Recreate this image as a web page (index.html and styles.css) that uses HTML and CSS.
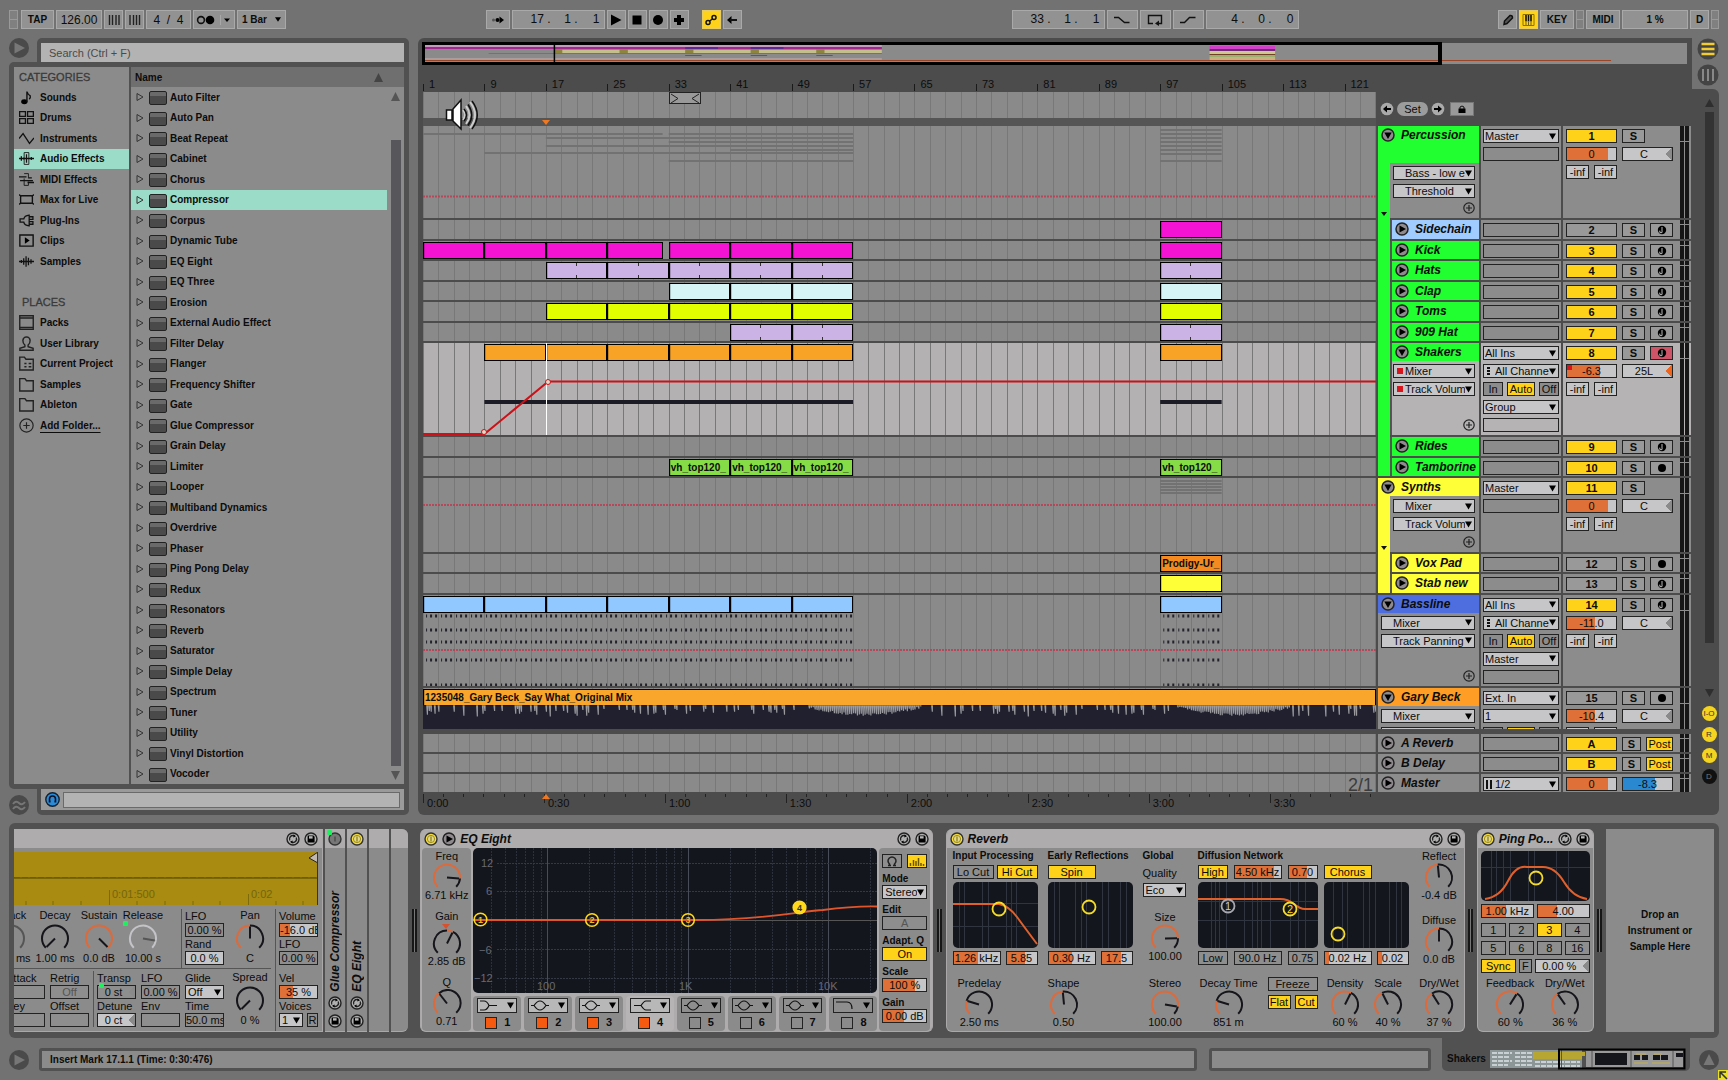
FILE: index.html
```html
<!DOCTYPE html>
<html lang="en">
<head>
<meta charset="utf-8">
<meta name="viewport" content="width=device-width, initial-scale=1">
<title>Arrangement</title>
<link rel="stylesheet" href="styles.css">
</head>
<body>
<svg class="defs" aria-hidden="true">
  <symbol id="i-right" viewBox="0 0 14 14"><circle cx="7" cy="7" r="6" fill="#8e8a8e" stroke="#222" stroke-width="1.5"/><path d="M4.5 3.5L11 7L4.5 10.5Z"/></symbol>
  <symbol id="i-down" viewBox="0 0 14 14"><circle cx="7" cy="7" r="6" fill="#8e8a8e" stroke="#222" stroke-width="1.5"/><path d="M3.3 4.5H10.7L7 11Z"/></symbol>
  <symbol id="i-plus" viewBox="0 0 12 12"><circle cx="6" cy="6" r="5.2" fill="none" stroke="#222" stroke-width="1.2"/><path d="M6 3V9M3 6H9" stroke="#222" stroke-width="1.2"/></symbol>
  <symbol id="i-power" viewBox="0 0 14 14"><circle cx="7" cy="7" r="6" fill="#f5dc3c" stroke="#333" stroke-width="1.4"/><circle cx="7" cy="7" r="3.6" fill="#e2d98a" stroke="#8a7a10" stroke-width=".8"/><path d="M7 4.5V9.500" stroke="#8a7a10" stroke-width="1.2"/></symbol>
  <symbol id="i-off" viewBox="0 0 14 14"><circle cx="7" cy="7" r="6" fill="#777" stroke="#333" stroke-width="1.4"/><path d="M7 4.500V9.500" stroke="#444" stroke-width="1.200"/></symbol>
  <symbol id="i-swap" viewBox="0 0 14 14"><circle cx="7" cy="7" r="6" fill="#b0b0b0" stroke="#222" stroke-width="1.4"/><path d="M3.800 8.500A3.400 3.400 0 0 1 8 3.800M10.200 5.500A3.400 3.400 0 0 1 6 10.200" fill="none" stroke="#222" stroke-width="1.400"/><path d="M7.500 2.200L10 4.200L7.400 5.600ZM6.500 11.800L4 9.800L6.600 8.400Z"/></symbol>
  <symbol id="i-save" viewBox="0 0 14 14"><circle cx="7" cy="7" r="6" fill="#b0b0b0" stroke="#222" stroke-width="1.400"/><path d="M3.600 3.600H9.400L10.600 4.800V10.500H3.600Z"/><path d="M5 4.200H8.600V6.600H5Z" fill="#bbb"/></symbol>
  <symbol id="i-midi" viewBox="0 0 10 10"><circle cx="5" cy="5" r="4.200"/><path d="M5 2V6.200M5 6.200A1.200 1 0 1 1 3.200 5.800" stroke="#aaa" stroke-width="1.100" fill="none"/></symbol>
  <symbol id="i-audio" viewBox="0 0 10 10"><circle cx="5" cy="5" r="4"/></symbol>
</svg>

<header class="transport">
  <div class="tgroup">
    <span class="nub first"></span>
    <button class="tb w-tap">TAP</button>
    <input class="tb num w-tempo" value="126.00" aria-label="Tempo">
    <button class="tb w-s" aria-label="Nudge down"><svg width="12" height="10"><path d="M1.500 0V10M4.500 0V10M8 0V10M11 0V10" stroke="#222" stroke-width="1.400"/></svg></button>
    <button class="tb w-s" aria-label="Nudge up"><svg width="12" height="10"><path d="M1 0V10M4.500 0V10M7.500 0V10M10.500 0V10" stroke="#222" stroke-width="1.400"/></svg></button>
    <input class="tb num w-sig" value="4  /  4" aria-label="Time signature">
    <button class="tb w-met" aria-label="Metronome"><svg width="36" height="10"><circle cx="5" cy="5" r="3.400" fill="none" stroke="#111" stroke-width="1.600"/><circle cx="14" cy="5" r="4.300"/><path d="M24.500 -4V14" stroke="#a8a8a8"/><path d="M28 3.500H34L31 7Z"/></svg></button>
    <select class="tb w-quant" aria-label="Quantization"><option>1 Bar</option></select>
  </div>
  <div class="tcenter">
    <div class="tgroup">
      <button class="tb w-24" aria-label="Follow"><svg width="14" height="10"><circle cx="2.500" cy="5" r="1.500" fill="#555"/><circle cx="6.500" cy="5" r="2"/><path d="M8.500 1.500L13 5L8.500 8.500Z"/></svg></button>
      <div class="tb pos"><input value="17 ." aria-label="Bar"><input value="1 ." aria-label="Beat"><input value="1" aria-label="Sixteenth"></div>
      <button class="tb w-s" aria-label="Play"><svg width="12" height="12"><path d="M1 0.500L11.500 6L1 11.500Z"/></svg></button>
      <button class="tb w-s" aria-label="Stop"><svg width="10" height="10"><path d="M.5.5H9.500V9.500H.5Z"/></svg></button>
      <button class="tb w-s" aria-label="Record"><svg width="12" height="12"><circle cx="6" cy="6" r="5"/></svg></button>
      <button class="tb w-s" aria-label="Overdub"><svg width="12" height="12"><path d="M4 1H8V4H11V8H8V11H4V8H1V4H4Z"/></svg></button>
      <span class="tgap"></span>
      <button class="tb w-s on" aria-label="Automation arm"><svg width="12" height="12" fill="none" stroke="#111" stroke-width="1.500"><circle cx="3" cy="8.500" r="2"/><circle cx="9" cy="3.500" r="2"/><path d="M4.500 7L7.500 5"/></svg></button>
      <button class="tb w-s" aria-label="Re-enable automation"><svg width="12" height="10"><path d="M1 5L5.500 1V9Z"/><path d="M4 5H11" stroke="#111" stroke-width="2"/></svg></button>
    </div>
    <div class="tgroup">
      <div class="tb pos"><input value="33 ." aria-label="Loop bar"><input value="1 ." aria-label="Loop beat"><input value="1" aria-label="Loop sixteenth"></div>
      <button class="tb w-31" aria-label="Punch in"><svg width="16" height="8" fill="none" stroke="#111" stroke-width="1.400"><path d="M0 1.500H4.500L10.500 6.500H15.500"/></svg></button>
      <button class="tb w-31" aria-label="Loop"><svg width="16" height="12" fill="none" stroke="#111" stroke-width="1.400"><path d="M6 9.500H1.500V1.500H14.500V9.500H10"/><path d="M12 6.500V12L8 9.500Z" fill="#111" stroke="none"/></svg></button>
      <button class="tb w-31" aria-label="Punch out"><svg width="16" height="8" fill="none" stroke="#111" stroke-width="1.400"><path d="M0 6.500H4.500L9.500 1.500H15.500"/></svg></button>
      <div class="tb pos"><input value="4 ." aria-label="Loop length bars"><input value="0 ." aria-label="Loop length beats"><input value="0" aria-label="Loop length sixteenths"></div>
    </div>
  </div>
  <div class="tgroup">
    <button class="tb w-s" aria-label="Draw"><svg width="12" height="12"><path d="M2 10.500L2.500 7L8 1.500Q10.500 1 10.500 4L5 9.500Z" fill="#555" stroke="#111" stroke-width="1.500"/></svg></button>
    <button class="tb w-s on" aria-label="Computer keyboard"><svg width="13" height="12" fill="none" stroke="#111"><path d="M1 .5H12V11.500H1Z" stroke="#8a7000"/><path d="M4 1V7.500M6.500 1V7.500M9 1V7.500" stroke-width="1.600"/><path d="M4 8V11M6.500 8V11M9 8V11" stroke-width=".6"/></svg></button>
    <button class="tb w-34">KEY</button>
    <span class="nub"></span>
    <button class="tb w-34">MIDI</button>
    <output class="tb w-cpu">1 %</output>
    <button class="tb w-s">D</button>
    <span class="nub"></span>
  </div>
</header>

<main class="workspace">
  <aside class="browser">
    <div class="search-row">
      <button class="round" aria-label="Hide browser"><svg width="20" height="20"><circle cx="10" cy="10" r="10" fill="#4a4a4a"/><path d="M5.500 4.500L16 10L5.500 15.500Z" fill="#777"/></svg></button>
      <div class="search-frame"><input class="search" placeholder="Search (Ctrl + F)" aria-label="Search"></div>
    </div>
    <div class="browser-body">
      <nav class="side">
        <h2>CATEGORIES</h2>
        <ul class="rows side-rows">
          <li><a href="#"><svg viewBox="0 0 14 14"><ellipse cx="5" cy="11" rx="3" ry="2.300"/><path d="M7.400 11V1.500Q8 4 10.500 5.500Q11 7.500 9.500 8.500" fill="none" stroke="#111" stroke-width="1.300"/></svg>Sounds</a></li>
          <li><a href="#"><svg viewBox="0 0 14 14" fill="none" stroke="#111" stroke-width="1.200"><path d="M.6 1.600H6V6H.6ZM8 1.600H13.400V6H8ZM.6 8H6V12.400H.6ZM8 8H13.400V12.400H8Z"/></svg>Drums</a></li>
          <li><a href="#"><svg viewBox="0 0 14 14" fill="none" stroke="#111" stroke-width="1.200"><path d="M0 7L3.800 2.500L9.800 11.500L14 6.500"/></svg>Instruments</a></li>
          <li><a href="#" class="picked"><svg viewBox="0 0 14 14" fill="none" stroke="#111" stroke-width="1.200"><path d="M0 7H14M2.200 5V9M4.400 6V8M11.500 5.500V8.500M7 3V11"/><path d="M4.800 1.500H9.200V12.500H4.800Z" stroke-width=".8"/></svg>Audio Effects</a></li>
          <li><a href="#"><svg viewBox="0 0 14 14" fill="none" stroke="#111" stroke-width="1.200"><path d="M0 4.500H7M1 8H13M9 5.500H12M8 9.800H14"/><path d="M4.800 1.500H8.800V6M4.800 6V12.500H8.800V9" stroke-width=".8"/></svg>MIDI Effects</a></li>
          <li><a href="#"><svg viewBox="0 0 14 14" fill="none" stroke="#111" stroke-width="1.300"><rect x="1.500" y="3.500" width="11" height="7" rx="1"/><path d="M0 2.500L2 4M14 2.500L12 4M0 11.500L2 10M14 11.500L12 10"/></svg>Max for Live</a></li>
          <li><a href="#"><svg viewBox="0 0 14 14" fill="none" stroke="#111" stroke-width="1.200"><path d="M9.500 2V12Q5 11.500 4.500 8.500H1V5.500H4.500Q5 2.500 9.500 2ZM9.500 3.500H13V6H9.500M9.500 8H13V10.500H9.500"/></svg>Plug-Ins</a></li>
          <li><a href="#"><svg viewBox="0 0 14 14"><path d="M.8 1.800H13.200V12.200H.8Z" fill="none" stroke="#111" stroke-width="1.300"/><path d="M5.500 4L10 7L5.500 10Z"/></svg>Clips</a></li>
          <li><a href="#"><svg viewBox="0 0 14 14" fill="none" stroke="#111" stroke-width="1.200"><path d="M0 7H14M2.200 5.500V8.500M4.400 4V10M6.600 2V12M8.800 3.500V10.500M11.200 5V9"/></svg>Samples</a></li>
          <li></li>
          <li><h2>PLACES</h2></li>
          <li><a href="#"><svg viewBox="0 0 14 14" fill="none" stroke="#222" stroke-width="1.300"><path d="M.7 .7H13.300V13.300H.7ZM.7 2.800H13.300M.7 11.500H13.300"/></svg>Packs</a></li>
          <li><a href="#"><svg viewBox="0 0 14 14" fill="none" stroke="#222" stroke-width="1.300"><path d="M5.500 8.500Q3.500 7 3.600 4Q4 1 7 .8Q10 1 10.400 4Q10.500 7 8.500 8.500V10L13.200 11.500V13.300H.8V11.500L5.500 10Z"/></svg>User Library</a></li>
          <li><a href="#"><svg viewBox="0 0 14 14" fill="none" stroke="#222" stroke-width="1.300"><path d="M.7 13V1H5L6.500 3H13.300V13ZM5 7H7M9 7H11.500M5 10H7M9 10H11.500"/></svg>Current Project</a></li>
          <li><a href="#"><svg viewBox="0 0 14 14" fill="none" stroke="#222" stroke-width="1.300"><path d="M.7 13V1.500H5.500L7 3.500H13.300V13Z"/></svg>Samples</a></li>
          <li><a href="#"><svg viewBox="0 0 14 14" fill="none" stroke="#222" stroke-width="1.300"><path d="M.7 13V1.500H5.500L7 3.500H13.300V13Z"/></svg>Ableton</a></li>
          <li><a href="#"><svg viewBox="0 0 14 14" fill="none" stroke="#222" stroke-width="1.100"><circle cx="7" cy="7" r="6.200"/><path d="M7 4V10M4 7H10"/></svg><u>Add Folder...</u></a></li>
        </ul>
      </nav>
      <section class="files">
        <div class="files-head"><span>Name</span><svg width="9" height="9"><path d="M0 9L4.500 0L9 9Z" fill="#444"/></svg></div>
        <div class="files-body">
          <ul class="rows file-rows">
            <li><button>Auto Filter</button></li><li><button>Auto Pan</button></li><li><button>Beat Repeat</button></li><li><button>Cabinet</button></li><li><button>Chorus</button></li><li><button class="picked">Compressor</button></li><li><button>Corpus</button></li><li><button>Dynamic Tube</button></li><li><button>EQ Eight</button></li><li><button>EQ Three</button></li><li><button>Erosion</button></li><li><button>External Audio Effect</button></li><li><button>Filter Delay</button></li><li><button>Flanger</button></li><li><button>Frequency Shifter</button></li><li><button>Gate</button></li><li><button>Glue Compressor</button></li><li><button>Grain Delay</button></li><li><button>Limiter</button></li><li><button>Looper</button></li><li><button>Multiband Dynamics</button></li><li><button>Overdrive</button></li><li><button>Phaser</button></li><li><button>Ping Pong Delay</button></li><li><button>Redux</button></li><li><button>Resonators</button></li><li><button>Reverb</button></li><li><button>Saturator</button></li><li><button>Simple Delay</button></li><li><button>Spectrum</button></li><li><button>Tuner</button></li><li><button>Utility</button></li><li><button>Vinyl Distortion</button></li><li><button>Vocoder</button></li>
          </ul>
          <div class="scroll"><svg width="9" height="9"><path d="M0 9L4.500 0L9 9Z" fill="#555"/></svg><i></i><svg width="9" height="9"><path d="M0 0H9L4.500 9Z" fill="#555"/></svg></div>
        </div>
      </section>
    </div>
    <div class="preview-row">
      <button class="round" aria-label="Groove pool"><svg width="20" height="20"><circle cx="10" cy="10" r="10" fill="#4a4a4a"/><path d="M4 9Q7 5 10 8T16 7M4 14Q7 10 10 13T16 12" fill="none" stroke="#777" stroke-width="2"/></svg></button>
      <div class="preview-frame"><div class="preview-box"><svg width="15" height="15"><circle cx="7.500" cy="7.500" r="6.700" fill="#2b8bd6" stroke="#123" stroke-width="1.400"/><path d="M4.500 10.500V7A3 3 0 0 1 10.500 7V10.500M4.800 8.500V10.500M10.200 8.500V10.500" fill="none" stroke="#112" stroke-width="1.600"/></svg><input aria-label="Preview"></div></div>
    </div>
  </aside>

  <section class="arrange">
    <div class="arr-main">
      <div class="overview" id="overview"></div>
      <div class="line-row"><div class="ruler" id="ruler"></div></div>
      <div class="line-row scrub-row">
        <div class="scrub"><span class="loop-brace" id="brace"><svg width="31" height="11" fill="none" stroke="#222"><path d="M1 1L8 5.500L1 10M29 1L22 5.500L29 10"/></svg></span></div>
        <div class="locators">
          <button class="bare" aria-label="Previous locator"><svg width="14" height="14"><circle cx="7" cy="7" r="6.300" fill="#aaa"/><path d="M3 7L7 3.500V10.500Z"/><path d="M6 7H11" stroke="#000" stroke-width="2"/></svg></button>
          <button class="set">Set</button>
          <button class="bare" aria-label="Next locator"><svg width="14" height="14"><circle cx="7" cy="7" r="6.300" fill="#aaa"/><path d="M11 7L7 3.500V10.500Z"/><path d="M3 7H8" stroke="#000" stroke-width="2"/></svg></button>
          <button class="lock" aria-label="Lock envelopes"><svg width="8" height="8"><path d="M.5 3.500H7.500V8H.5Z"/><path d="M2 4V2Q4 0 6 2V4" fill="none" stroke="#111"/></svg></button>
        </div>
        <svg class="speaker" width="38" height="34"><path d="M1.500 12H7V22H1.500ZM8 11L16 2V31L8 23Z" fill="#fff" stroke="#111" stroke-width="1.500"/><path d="M18 12Q22 17 18 22M21 8Q28 17 21 26M25 4Q35 17 25 30" fill="none" stroke="#ccc" stroke-width="2"/><path d="M19 11Q24 17 19 23M23 6.500Q30.500 17 23 27.500M27 3Q37.500 17 27 31" fill="none" stroke="#111" stroke-width="1.500"/></svg>
      </div>
      <div class="line-row"><div class="insert-strip"><svg class="at-insert" width="9" height="5"><path d="M0 0H8L4 5Z" fill="#f07820"/></svg></div></div>
      <div class="tracks" id="tracks"></div>
      <div class="tracks returns" id="returns"></div>
      <div class="line-row time-row"><div class="time-ruler" id="time"></div></div>
      <span class="zoom-level">2/1</span>
    </div>
    <div class="rail">
      <div class="rail-top">
        <button class="bare" aria-label="Arrangement view"><svg width="22" height="22"><circle cx="11" cy="11" r="10.500" fill="#444"/><path d="M4.500 6H17.500M4.500 11H17.500M4.500 16H17.500" stroke="#f2cc30" stroke-width="2.400"/></svg></button>
        <button class="bare" aria-label="Session view"><svg width="22" height="22"><circle cx="11" cy="11" r="10.500" fill="#444"/><path d="M6 5V17M11 5V17M16 5V17" stroke="#888" stroke-width="2"/></svg></button>
      </div>
      <div class="rail-body">
        <svg width="9" height="8"><path d="M0 8L4.500 0L9 8Z" fill="#2e2e2e"/></svg>
        <i></i>
        <svg width="9" height="8"><path d="M0 0H9L4.500 8Z" fill="#2e2e2e"/></svg>
        <button class="dot on">I-O</button><button class="dot on">R</button><button class="dot on">M</button><button class="dot">D</button>
      </div>
    </div>
  </section>
</main>

<section class="devices">
  <article class="device cut">
    <header><span class="grow"></span><svg class="ic"><use href="#i-swap"/></svg><svg class="ic"><use href="#i-save"/></svg></header>
    <div class="synth">
      <div class="wave">
        <svg width="304" height="53"><path d="M0 26H304" stroke="#7a6808" stroke-width="2"/><path d="M0 25.500H304" stroke="#5a5a4a" stroke-dasharray="6 2"/><path d="M12 49V53M39 49V53M67 49V53M95.500 38V53M123 49V53M151 49V53M179 49V53M206 49V53M234.500 42V53M262 49V53M289 49V53" stroke="#7d6a0c"/><path d="M304 0V11L295 6Z" fill="#c0b8b0" stroke="#222"/><text x="98" y="46" fill="#75650f" font-size="11">0:01:500</text><text x="237" y="46" fill="#75650f" font-size="11">0:02</text></svg>
      </div>
      <div class="synth-params">
        <div class="synth-left">
          <div class="prow top">
            <div class="kn w45" data-v="0" data-k="Attack" data-t="0.00 ms" data-dim></div>
            <div class="kn w45" data-v="0" data-k="Decay" data-t="1.00 ms"></div>
            <div class="kn w45" data-v="1" data-k="Sustain" data-t="0.0 dB"></div>
            <div class="kn w45 marked" data-v=".87" data-k="Release" data-t="10.00 s" data-pale></div>
            <div class="pcol sep w47">
              <label>LFO<input class="box off" value="0.00 %"></label>
              <label>Rand<input class="box" value="0.0 %"></label>
            </div>
            <div class="kn w42" data-v=".5" data-k="Pan" data-t="C"></div>
          </div>
          <div class="prow bottom">
            <div class="pcol"><label>Attack<input class="box off" value=""></label><label>Key<input class="box off" value=""></label></div>
            <div class="pcol"><label>Retrig<input class="box off dimtext" value="Off"></label><label>Offset<input class="box off" value=""></label></div>
            <div class="pcol sep"><label class="marked">Transp<input class="box off bi" value="0 st"></label><label>Detune<input class="box bi" value="0 ct"></label></div>
            <div class="pcol"><label>LFO<input class="box off" value="0.00 %"></label><label>Env<input class="box off" value=""></label></div>
            <div class="pcol"><label>Glide<select class="box"><option>Off</option></select></label><label>Time<input class="box off" value="50.0 ms"></label></div>
            <div class="kn w42" data-v="0" data-k="Spread" data-t="0 %"></div>
          </div>
        </div>
        <div class="pcol synth-right sep">
          <label>Volume<input class="box fill" style="--v:26%" value="-16.0 dB"></label>
          <label>LFO<input class="box off" value="0.00 %"></label>
          <label class="push">Vel<input class="box fill" style="--v:35%" value="35 %"></label>
          <label>Voices<span class="pair"><select class="box"><option>1</option></select><button class="box off tiny">R</button></span></label>
        </div>
      </div>
    </div>
  </article>
  <div class="folded marked"><header><svg class="ic"><use href="#i-off"/></svg></header><h3>Glue Compressor</h3><svg class="ic"><use href="#i-swap"/></svg><svg class="ic"><use href="#i-save"/></svg></div>
  <div class="folded"><header><svg class="ic"><use href="#i-power"/></svg></header><h3>EQ Eight</h3><svg class="ic"><use href="#i-swap"/></svg><svg class="ic"><use href="#i-save"/></svg></div>
  <div class="folded"><header></header></div>
  <div class="folded end"><header></header></div>
  <div class="level"></div>

  <article class="device eq">
    <header><svg class="ic"><use href="#i-power"/></svg><svg class="ic"><use href="#i-right"/></svg><h3>EQ Eight</h3><svg class="ic"><use href="#i-swap"/></svg><svg class="ic"><use href="#i-save"/></svg></header>
    <div class="eq-body">
      <div class="eq-knobs">
        <div class="kn" data-v=".85" data-k="Freq" data-t="6.71 kHz"></div>
        <div class="kn tri" data-v=".6" data-from=".5" data-k="Gain" data-t="2.85 dB"></div>
        <div class="kn" data-v=".36" data-k="Q" data-t="0.71"></div>
      </div>
      <div class="eq-center">
        <svg class="eq-graph" id="eqgraph" width="404" height="145" viewBox="0 0 404 145"></svg>
        <div class="bands">
          <div class="band"><select class="s-lc" aria-label="Filter 1 type"><option></option></select><label><input type="checkbox" checked>1</label></div>
          <div class="band"><select class="s-bell" aria-label="Filter 2 type"><option></option></select><label><input type="checkbox" checked>2</label></div>
          <div class="band"><select class="s-bell" aria-label="Filter 3 type"><option></option></select><label><input type="checkbox" checked>3</label></div>
          <div class="band cur"><select class="s-hs" aria-label="Filter 4 type"><option></option></select><label><input type="checkbox" checked>4</label></div>
          <div class="band idle"><select class="s-bell" aria-label="Filter 5 type"><option></option></select><label><input type="checkbox">5</label></div>
          <div class="band idle"><select class="s-bell" aria-label="Filter 6 type"><option></option></select><label><input type="checkbox">6</label></div>
          <div class="band idle"><select class="s-bell" aria-label="Filter 7 type"><option></option></select><label><input type="checkbox">7</label></div>
          <div class="band idle"><select class="s-hc" aria-label="Filter 8 type"><option></option></select><label><input type="checkbox">8</label></div>
        </div>
      </div>
      <div class="eq-side">
        <div class="pair"><button class="box off" aria-label="Audition"><svg width="12" height="11"><path d="M3.500 10V8A4 4 0 1 1 8.500 8V10" fill="none" stroke="#222" stroke-width="1.500"/><path d="M2 9.500H5M7 9.500H10" stroke="#222" stroke-width="1.500"/></svg></button><button class="box yes" aria-label="Analyze"><svg width="16" height="9"><path d="M1.500 6V9M4.500 3V9M7 4V9M9.500 1V9M12 6V9M14.500 7V9" stroke="#6a5600" stroke-width="1.500"/></svg></button></div>
        <label>Mode<select class="box"><option>Stereo</option></select></label>
        <label>Edit<input class="box off dimtext" value="A"></label>
        <label>Adapt. Q<input type="button" class="box yes" value="On"></label>
        <label>Scale<input class="box fill" style="--v:74%" value="100 %"></label>
        <label>Gain<input class="box fill" style="--v:50%" value="0.00 dB"></label>
      </div>
    </div>
  </article>
  <div class="level"></div>

  <article class="device reverb">
    <header><svg class="ic"><use href="#i-power"/></svg><h3>Reverb</h3><svg class="ic"><use href="#i-swap"/></svg><svg class="ic"><use href="#i-save"/></svg></header>
    <div class="rv">
      <section class="rv-col w85">
        <h4>Input Processing</h4>
        <div class="boxes"><button class="box off f1">Lo Cut</button><button class="box yes f1">Hi Cut</button></div>
        <svg class="scope" width="85" height="66"><path class="mesh" d="M6.500 0V66M11.500 0V66M29.500 0V66M35.500 0V66M53.500 0V66M58.500 0V66M63.500 0V66M0 21.500H85M0 44.500H85"/><path d="M0 22H46Q56 24 64 35T84 62" class="curve"/><circle cx="46" cy="27" r="6.500" class="node"/></svg>
        <div class="boxes"><input class="box fill f5" style="--v:52%" value="1.26 kHz" aria-label="Input frequency"><input class="box fill f3" style="--v:60%" value="5.85" aria-label="Input width"></div>
        <div class="kn left" data-v=".23" data-k="Predelay" data-t="2.50 ms"></div>
      </section>
      <section class="rv-col w85">
        <h4>Early Reflections</h4>
        <div class="boxes"><button class="box yes w48">Spin</button></div>
        <svg class="scope" width="85" height="66"><path class="mesh" d="M6.500 0V66M11.500 0V66M27.500 0V66M33.500 0V66M38.500 0V66M54.500 0V66M60.500 0V66M72.500 0V66M78.500 0V66"/><circle cx="41" cy="25" r="6.500" class="node"/></svg>
        <div class="boxes"><input class="box fill f5" style="--v:50%" value="0.30 Hz" aria-label="Spin rate"><input class="box fill f3" style="--v:62%" value="17.5" aria-label="Spin amount"></div>
        <div class="kn left2" data-v=".48" data-k="Shape" data-t="0.50"></div>
      </section>
      <section class="rv-col w45">
        <h4>Global</h4>
        <label class="qual">Quality<select class="box"><option>Eco</option></select></label>
        <div class="kn size" data-v=".83" data-k="Size" data-t="100.00"></div>
        <div class="kn" data-v=".87" data-k="Stereo" data-t="100.00"></div>
      </section>
      <section class="rv-col w120">
        <h4>Diffusion Network</h4>
        <div class="boxes"><button class="box yes w30">High</button><input class="box fill w48" style="--v:84%" value="4.50 kHz" aria-label="High frequency"><input class="box fill w30" style="--v:65%" value="0.70" aria-label="High gain"></div>
        <svg class="scope" width="120" height="66"><path class="mesh" d="M13.500 0V66M17.500 0V66M21.500 0V66M28.500 0V66M46.500 0V66M54.500 0V66M59.500 0V66M63.500 0V66M72.500 0V66M92.500 0V66M100.500 0V66M107.500 0V66M0 19.500H120M0 38.500H120"/><path d="M0 17H82Q90 17 96 22T107 27H120" class="curve"/><circle cx="30" cy="24" r="6.500" class="node dim"/><circle cx="92" cy="27" r="6.500" class="node"/><text x="27" y="28" fill="#ccc">1</text><text x="89" y="31" fill="#fd0">2</text></svg>
        <div class="boxes"><button class="box off w30">Low</button><input class="box off w48" value="90.0 Hz" aria-label="Low frequency"><input class="box off w30" value="0.75" aria-label="Low gain"></div>
        <div class="foot"><div class="kn w60" data-v=".23" data-k="Decay Time" data-t="851 m"></div><div class="fz"><button class="box off">Freeze</button><div class="pair"><button class="box yes">Flat</button><button class="box yes">Cut</button></div></div></div>
      </section>
      <section class="rv-col w85 chorus">
        <h4>&nbsp;</h4>
        <div class="boxes"><button class="box yes w48">Chorus</button></div>
        <svg class="scope" width="85" height="66"><path class="mesh" d="M9.500 0V66M18.500 0V66M23.500 0V66M39.500 0V66M45.500 0V66M51.500 0V66M65.500 0V66M72.500 0V66M77.500 0V66"/><circle cx="14" cy="52" r="6.500" class="node"/></svg>
        <div class="boxes"><input class="box fill f5" style="--v:9%" value="0.02 Hz" aria-label="Chorus rate"><input class="box fill f3" style="--v:12%" value="0.02" aria-label="Chorus amount"></div>
        <div class="foot"><div class="kn w43" data-v=".6" data-k="Density" data-t="60 %"></div><div class="kn w43" data-v=".4" data-k="Scale" data-t="40 %"></div></div>
      </section>
      <section class="rv-col w45 rv-end">
        <div class="kn" data-v=".48" data-k="Reflect" data-t="-0.4 dB"></div>
        <div class="kn" data-v=".5" data-k="Diffuse" data-t="0.0 dB"></div>
        <div class="kn" data-v=".38" data-k="Dry/Wet" data-t="37 %"></div>
      </section>
    </div>
  </article>
  <div class="level"></div>

  <article class="device pp">
    <header><svg class="ic"><use href="#i-power"/></svg><h3>Ping Po...</h3><svg class="ic"><use href="#i-swap"/></svg><svg class="ic"><use href="#i-save"/></svg></header>
    <div class="pp-body">
      <svg class="scope" width="109" height="50"><path class="mesh" d="M10.500 0V50M15.500 0V50M22.500 0V50M29.500 0V50M47.500 0V50M53.500 0V50M75.500 0V50M87.500 0V50M0 16.500H109"/><path d="M4 48Q19 46 27 30T46 16H62Q74 16 83 31T106 48" class="curve"/><circle cx="55" cy="27" r="6.500" class="node"/></svg>
      <div class="boxes"><input class="box fill f1" style="--v:48%" value="1.00 kHz" aria-label="Filter frequency"><input class="box fill f1" style="--v:38%" value="4.00" aria-label="Filter width"></div>
      <div class="beats"><button class="box off">1</button><button class="box off">2</button><button class="box yes">3</button><button class="box off">4</button><button class="box off">5</button><button class="box off">6</button><button class="box off">8</button><button class="box off">16</button></div>
      <div class="boxes"><button class="box yes w35">Sync</button><button class="box off w14">F</button><input class="box bi f1" value="0.00 %" aria-label="Swing"></div>
      <div class="foot"><div class="kn" data-v=".62" data-k="Feedback" data-t="60 %"></div><div class="kn" data-v=".37" data-k="Dry/Wet" data-t="36 %"></div></div>
    </div>
  </article>
  <div class="level"></div>
  <p class="drop">Drop an<br>Instrument or<br>Sample Here</p>
</section>

<footer class="status">
  <button class="round" aria-label="Info view"><svg width="20" height="20"><circle cx="10" cy="10" r="10" fill="#4a4a4a"/><path d="M5.500 4.500L16 10L5.500 15.500Z" fill="#777"/></svg></button>
  <p class="msg">Insert Mark 17.1.1 (Time: 0:30:476)</p>
  <p class="msg2"></p>
  <div class="tab"><span>Shakers</span>
    <svg width="196" height="22" viewBox="0 0 196 22"><path d="M0 2H92V20H0Z" fill="#8d9696"/><path d="M2 5H22M2 9H20M2 13H22M2 17H18M25 5H42M25 9H42M25 13H42M25 17H42M45 14H90M45 18H90" stroke="#c8d0d4" stroke-width="2" stroke-dasharray="5 1"/><path d="M43 4H92V11H43ZM70 4H95V8H70Z" fill="#b8a632"/><path d="M96 3H193V19H96Z" fill="#999"/><path d="M105 5H137V17H105ZM144 7H150V12H144ZM152 7H158V12H152ZM163 7H170V12H163ZM171 7H178V12H171ZM186 5H193V9H186Z" fill="#15151c"/><path d="M144 15H158M162 15H180M146 6H156M164 6H172" stroke="#c9b040"/><path d="M71.500 2V20M102 2V20M141 2V20M183 2V20" stroke="#555"/><path d="M69 1.500H194.500V20.500H69Z" fill="none" stroke="#000" stroke-width="2"/></svg>
  </div>
  <button class="round" aria-label="Clip view"><svg width="20" height="20"><circle cx="10" cy="10" r="10" fill="#4a4a4a"/><path d="M4.500 15L10 4L15.500 15Z" fill="#777"/></svg></button>
</footer>
<svg class="corner" width="10" height="10"><path d="M0 0H10V10H0Z" fill="#e8e020"/><path d="M2 8V2H8M2 2L9 9" fill="none" stroke="#333" stroke-width="1.500"/></svg>
<script src="app.js"></script>
</body>
</html>
```
FILE: app.js
```js
const BARS = 124.1;
const pct = bars => (bars / BARS * 100).toFixed(3) + '%';
const seq = (from, to) => { const out = []; for (let b = from; b < to; b += 8) out.push([b, b + 8]); return out; };
const LAST = [97, 105];

const PINK = '#f413d3', LILAC = '#ccb3e6', ICE = '#d6f3f5', LIME = '#e2ff00', ORANGE = '#f8a226', SKY = '#90c8ff', LEAF = '#86dc46';
const GREEN = '#22ff30', YELLOW = '#ffff38';

const summary = (from, to, ys) => ys.map(y => `<path d="M${from - 1} ${y}H${to - 1}" stroke="#727272" stroke-width="2"/>`).join('');
const dotted = y => `<path d="M0 ${y}H${BARS}" stroke="#c03a50" stroke-width="2" stroke-dasharray="2 1" opacity=".8"/>`;
const notes = y => [[0, 56], [96, 104]].map(([a, b]) => `<path d="M${a + .4} ${y}H${b}" stroke="#22222a" stroke-width="3" stroke-dasharray="1 3 2 3 2 4"/>`).join('');

function waveform() {
  let d = 'M0 18', seed = 7;
  for (let x = 0; x < BARS; x += .25) {
    seed = (seed * 73 + 41) % 997;
    let depth = seed % 100 < 26 ? 4 + seed % 9 : 0;
    for (const [a, b] of [[50, 65], [98, 113]]) {
      if (x > a && x < b) depth = 1 + 8 * Math.sin((x - a) / (b - a) * Math.PI) + seed % 3;
    }
    d += `L${x} ${18 + depth}L${x + .15} ${18 + depth}L${x + .16} 18`;
  }
  return `<path d="M0 18H${BARS}V44H0Z" fill="#20202e" stroke="none"/><path d="${d}Z" fill="#9a9a9f" stroke="none"/>`;
}

const tracks = [
  { name: 'Percussion', color: GREEN, kind: 'group', tall: true, h: 188, px: 92, devices: ['Bass - low e', 'Threshold'], io: ['Master', ''], num: 1, on: true, vol: ['0', 83], pan: 'C',
    draw: summary(1, 32.2, [8]) + summary(17, 57, [12, 20]) + summary(9, 57, [27]) + summary(33, 57, [8, 16, 35]) + summary(41, 57, [24]) + summary(97, 105, [4, 8, 12, 16, 20, 24, 28, 35]) + dotted(70.5) },
  { name: 'Sidechain', color: '#a0ccff', parent: GREEN, num: 2, clips: [LAST], clip: PINK },
  { name: 'Kick', color: GREEN, parent: GREEN, num: 3, on: true, clips: [...seq(1, 25), [25, 32.3], ...seq(33, 57), LAST], clip: PINK },
  { name: 'Hats', color: GREEN, parent: GREEN, num: 4, on: true, clips: [...seq(17, 57), LAST], clip: LILAC, split: true },
  { name: 'Clap', color: GREEN, parent: GREEN, num: 5, on: true, clips: [...seq(33, 57), LAST], clip: ICE },
  { name: 'Toms', color: GREEN, parent: GREEN, num: 6, on: true, clips: [...seq(17, 57), LAST], clip: LIME },
  { name: '909 Hat', color: GREEN, parent: GREEN, num: 7, on: true, clips: [...seq(41, 57), LAST], clip: LILAC, split: true },
  { name: 'Shakers', color: GREEN, parent: GREEN, selected: true, h: 188, px: 92, devices: ['Mixer', 'Track Volum'], automated: true, io: ['All Ins', 'All Channe', 'monitor', 'Group', ''], num: 8, on: true, vol: ['-6.3', 67], pan: '25L',
    clips: [...seq(9, 57), LAST], clip: ORANGE,
    draw: `<path d="M8 59H56M96 59H104" stroke="#1c1c26" stroke-width="4"/><path d="M0 91H8L16.300 38.500H${BARS}" stroke="#cc1118" stroke-width="2" fill="none"/>`, nodes: true },
  { name: 'Rides', color: GREEN, parent: GREEN, num: 9, on: true },
  { name: 'Tamborine', color: GREEN, parent: GREEN, endGroup: true, num: 10, on: true, audio: true, clips: [...seq(33, 57), LAST], clip: LEAF, label: 'vh_top120_' },
  { name: 'Synths', color: YELLOW, kind: 'group', h: 151, px: 73.5, devices: ['Mixer', 'Track Volum'], io: ['Master', ''], num: 11, on: true, vol: ['0', 83], pan: 'C',
    draw: summary(97, 105, [3, 6, 9, 12, 15]) + dotted(27) },
  { name: 'Vox Pad', color: YELLOW, parent: YELLOW, num: 12, audio: true, clips: [LAST], clip: '#f58a20', label: 'Prodigy-Ur_' },
  { name: 'Stab new', color: YELLOW, parent: YELLOW, endGroup: true, num: 13, clips: [LAST], clip: YELLOW },
  { name: 'Bassline', color: '#4e6ee0', h: 187, px: 91.5, devices: ['Mixer', 'Track Panning'], io: ['All Ins', 'All Channe', 'monitor', 'Master', ''], num: 14, on: true, vol: ['-11.0', 57], pan: 'C',
    clips: [...seq(1, 57), LAST], clip: SKY, draw: [21, 35, 47, 65, 90].map(notes).join('') + dotted(55) },
  { name: 'Gary Beck', color: '#ff9d24', h: 86, px: 43, noPlus: true, devices: ['Mixer', ''], io: ['Ext. In', '1', 'monitor'], num: 15, audio: true, vol: ['-10.4', 58], pan: 'C',
    clips: [[1, 1 + BARS]], clip: '#f8a62c', label: '1235048_Gary Beck_Say What_Original Mix', draw: waveform() },
];

const returns = [
  { name: 'A Reverb', color: '#8c8c8c', num: 'A', on: true, post: true },
  { name: 'B Delay', color: '#8c8c8c', num: 'B', on: true, post: true },
  { name: 'Master', color: '#8c8c8c', master: true, io: ['1/2'] },
];

const select = (text, cls = '', label = 'Select') => `<select class="fld ${cls}" aria-label="${label}"><option>${text}</option></select>`;

function ioField(v, i, t) {
  if (v === 'monitor') return '<div class="monitor"><button>In</button><button class="yes">Auto</button><button>Off</button></div>';
  if (v === '') return '<span class="fld blank"></span>';
  return select(v, v === 'All Channe' ? 'chan' : t.master ? 'bus' : '', 'Routing ' + (i + 1));
}

function mixer(t) {
  if (t.master) return `<input class="fld fill two" style="--v:83%" value="0" aria-label="Master volume"><input class="fld fill cue two" style="--v:65%" value="-8.3" aria-label="Cue volume">`;
  let out = `<button class="fld act two ${t.on ? 'yes' : ''}">${t.num}</button>`;
  if (t.post) return out + '<div class="two send"><button class="fld act">S</button><button class="fld yes">Post</button></div>';
  out += '<button class="fld act">S</button>';
  out += t.kind ? '<span></span>' : `<button class="fld act ${t.selected ? 'armed' : ''}" aria-label="Arm ${t.name}"><svg width="10" height="10"><use href="#${t.audio ? 'i-audio' : 'i-midi'}"/></svg></button>`;
  if (t.vol) {
    out += `<input class="fld fill two ${t.automated ? 'auto' : ''}" style="--v:${t.vol[1]}%" value="${t.vol[0]}" aria-label="${t.name} volume">`;
    out += `<input class="fld pan two ${t.pan === 'C' ? '' : 'moved'}" value="${t.pan}" aria-label="${t.name} pan">`;
    out += '<output class="fld">-inf</output><output class="fld">-inf</output>';
  }
  return out;
}

function row(t) {
  const cls = ['track', t.kind || '', t.parent ? 'child' : '', t.selected ? 'selected' : '', t.tall ? 'tall' : '', t.devices ? 'open' : '', t.endGroup ? 'last' : ''].filter(Boolean).join(' ');
  const clips = (t.clips || []).map(([a, b]) => `<span class="clip ${t.split ? 'split' : ''}" style="left:${pct(a - 1)};width:${pct(b - a)};background-color:${t.clip}">${t.label || ''}</span>`).join('');
  const art = t.draw ? `<svg class="art" viewBox="0 0 ${BARS} ${t.px}" preserveAspectRatio="none">${t.draw}</svg>` : '';
  const nodes = t.nodes ? `<i class="cursor" style="left:${pct(16)}"></i><i class="node-a" style="left:${pct(7.9)}"></i><i class="node-b" style="left:${pct(16.3)}"></i>` : '';
  const bar = t.parent || t.kind ? `<span class="group-bar" style="background:${t.parent || t.color}"></span>` : '';
  const body = t.devices ? `<div class="name-body">${t.devices.map((d, i) => select(d, t.automated ? 'lit' : 'pad', t.name + ' device ' + (i + 1))).join('')}${t.noPlus ? '' : '<button class="bare plus" aria-label="Add lane"><svg width="12" height="12"><use href="#i-plus"/></svg></button>'}</div>` : '';
  return `<section class="${cls}" style="flex-grow:${t.h || 41}">
    <div class="lane">${clips}${art}${nodes}</div>
    <div class="name-cell">${bar}<header style="background:${t.color}"><button class="bare" aria-label="Fold ${t.name}"><svg width="14" height="14"><use href="#${t.devices ? 'i-down' : 'i-right'}"/></svg></button><h3>${t.name}</h3></header>${body}</div>
    <div class="io">${(t.io || ['']).map((v, i) => ioField(v, i, t)).join('')}</div>
    <div class="mix"><div class="mix-grid">${mixer(t)}</div><span class="meter"></span></div>
  </section>`;
}
document.getElementById('tracks').innerHTML = tracks.map(row).join('');
document.getElementById('returns').innerHTML = returns.map(row).join('');

/* bar ruler and clock ruler */
let ruler = '';
for (let b = 1; b < 125; b += 8) ruler += `<span style="left:${pct(b - 1)}">${b}</span>`;
document.getElementById('ruler').innerHTML = ruler;
let time = '';
for (let s = 0; s < 236; s += 5) {
  const label = s % 30 ? '' : `${Math.floor(s / 60)}:${String(s % 60).padStart(2, '0')}`;
  time += `<span class="${label ? 'major' : ''}" style="left:${pct(s * 126 / 240)}">${label}</span>`;
}
document.getElementById('time').innerHTML = time + `<svg class="at-insert" style="left:${pct(16)}" width="9" height="5"><path d="M0 5H8L4 0Z" fill="#f07820"/></svg>`;
document.getElementById('brace').style.left = pct(32);
document.querySelector('.insert-strip .at-insert').style.left = pct(16);

/* whole-song overview, 8.2 units per bar */
const ov = [];
const seg = (a, b, y, h, c) => ov.push(`<rect x="${(a - 1) * 8.2}" y="${y}" width="${(b - a) * 8.2}" height="${h}" fill="${c}"/>`);
seg(1, 57, 2, 2, '#c59ac0'); seg(1, 57, 4, 2, '#a0288c');
[17, 25, 33, 41, 49].forEach(b => { seg(b, b + 8, 7, 3, '#c4bd8c'); seg(b, b + 1, 6, 4, '#8d8440'); });
seg(9, 57, 10, 1, '#a06a20'); seg(33, 35, 12, 1, '#3c7040'); seg(41, 43, 12, 1, '#3c7040'); seg(49, 51, 12, 1, '#3c7040');
seg(33, 37, 4, 2, '#5a2890'); seg(41, 45, 4, 2, '#5a2890'); seg(1, 57, 15, 2, '#a89c9c');
seg(97, 105, 3, 3, '#d040c8'); seg(97, 105, 6, 2, '#702878'); seg(97, 105, 8, 3, '#cfc88e'); seg(97, 105, 11, 1, '#704028'); seg(97, 105, 12, 2, '#9cb070'); seg(97, 105, 14, 3, '#c8b080');
seg(1, 146, 17, 1, '#9a4428');
document.getElementById('overview').innerHTML = `<svg viewBox="0 0 1265 21" preserveAspectRatio="none">${ov.join('')}<path d="M131.500 0V21" stroke="#000" stroke-width="1.500"/></svg><span class="view"></span>`;

/* rotary knobs: 270 degree ring, coloured up to the value */
const polar = (v, r) => { const a = (135 + 270 * v) * Math.PI / 180; return [(16 + r * Math.cos(a)).toFixed(1), (14.5 + r * Math.sin(a)).toFixed(1)]; };
const arc = (a, b, c) => { if (b - a < .01) return ''; const p = polar(a, 13), q = polar(b, 13); return `<path d="M${p}A13 13 0 ${(b - a) * 270 > 180 ? 1 : 0} 1 ${q}" stroke="${c}"/>`; };
document.querySelectorAll('.kn').forEach(el => {
  const v = +el.dataset.v, from = +(el.dataset.from || 0);
  const ink = 'pale' in el.dataset ? '#c4c4c8' : 'dim' in el.dataset ? '#555' : '#15151a';
  const hot = 'pale' in el.dataset ? '#c4c4c8' : '#dd6a3a';
  const tip = polar(v, 12);
  el.setAttribute('role', 'slider'); el.setAttribute('aria-label', el.dataset.k); el.setAttribute('aria-valuenow', v);
  el.innerHTML = `<span>${el.dataset.k}</span><svg width="32" height="26" fill="none" stroke-width="2">${arc(0, from, ink)}${arc(from, v, hot)}${arc(v, 1, ink)}<path d="M16 14.500L${tip}" stroke="${'pale' in el.dataset ? '#555' : ink}"/></svg><span>${el.dataset.t}</span>`;
});

/* EQ response */
let mesh = '';
for (const d of [-66.5, 74, 214.7, 355]) for (let n = 1; n < 10; n++) {
  const x = Math.round(d + 140.5 * Math.log10(n)) + .5;
  if (x > 10 && x < 404) mesh += `<path d="M${x} 0V145" stroke="${n === 1 ? '#484c58' : '#2c303a'}" ${n === 1 ? '' : 'stroke-dasharray="2 1"'}/>`;
}
for (const y of [15, 43, 101, 130]) mesh += `<path d="M24 ${y}.5H404" stroke="#343842" stroke-dasharray="2 1"/>`;
const dot = (x, y, n, full) => `<circle cx="${x}" cy="${y}" r="6.300" fill="${full ? '#ffd91a' : 'none'}" stroke="#ffd91a" stroke-width="1.600"/><text x="${x}" y="${y + 3}" text-anchor="middle" font-size="9" font-weight="700" fill="${full ? '#333' : '#f0b428'}">${n}</text>`;
document.getElementById('eqgraph').innerHTML = `${mesh}<path d="M18 72.500H404" stroke="#555"/>
  <g fill="#666a74" font-size="11"><text x="8" y="19">12</text><text x="13" y="47">6</text><text x="6" y="106">−6</text><text x="1" y="134">−12</text><text x="64" y="142">100</text><text x="206" y="142">1K</text><text x="345" y="142">10K</text></g>
  <path d="M0 72H225C290 72 330 63 350 62Q380 58 404 58.500" fill="none" stroke="#e0552c" stroke-width="1.800"/>
  ${dot(7.5, 71.5, 1)}${dot(119, 72, 2)}${dot(215, 72, 3)}${dot(326.5, 59.5, 4, true)}`;
```
FILE: styles.css
```css
* { box-sizing: border-box; }
:root {
  --page: #727272;
  --frame: #515151;
  --dark: #4c4c4c;
  --panel: #8b8b8b;
  --light: #c6c6c8;
  --yellow: #ffd21a;
  --mint: #9bdcc8;
  --arrow: url("data:image/svg+xml,%3Csvg xmlns='http://www.w3.org/2000/svg' width='7' height='7'%3E%3Cpath d='M0 .5H7L3.500 6.500Z'/%3E%3C/svg%3E");
}
body {
  margin: 0;
  min-height: 100vh;
  padding: 0 9px 9px;
  display: grid;
  grid-template-rows: 38px 1fr auto auto;
  background: var(--page);
  color: #0c0c0c;
  font: 11px/13px "Liberation Sans", Arial, sans-serif;
  position: relative;
}
button, input, select, output { font: inherit; color: inherit; margin: 0; padding: 0; border: 0; border-radius: 0; background: none; min-width: 0; }
select { appearance: none; }
ul, h2, h3, h4, p { margin: 0; padding: 0; list-style: none; font-weight: normal; font-size: 11px; }
svg { display: block; flex: none; }
.defs { position: absolute; width: 0; height: 0; }
.bare, .round { display: block; }
.round { width: 20px; height: 20px; flex: none; }

/* transport */
.transport { display: flex; justify-content: space-between; align-items: flex-start; padding-top: 10px; }
.tgroup { display: flex; gap: 2px; }
.tcenter { display: flex; gap: 270px; }
.tb { height: 19px; border: 1px solid #a9a9a9; background-color: #929292; font-weight: 700; font-size: 10px; text-align: center; display: flex; align-items: center; justify-content: center; }
.tb.num, .pos { font-size: 12px; font-weight: 400; white-space: pre; }
.tb.on, .tb.on:hover { background-color: var(--yellow); border-color: #e8cc60; }
.w-s { width: 19px; } .w-24 { width: 24px; } .w-31 { width: 31px; } .w-34 { width: 34px; }
.w-tap { width: 33px; } .w-tempo { width: 46px; } .w-sig { width: 45px; } .w-met { width: 42px; } .w-cpu { width: 66px; }
.w-quant { width: 49px; padding-left: 4px; text-align: left; background-image: var(--arrow); background-repeat: no-repeat; background-position: right 4px center; background-size: 6px 5px; }
.pos { width: 93px; justify-content: flex-end; padding-right: 4px; }
.pos input { width: 27px; text-align: right; }
.pos input:last-child { width: 22px; }
.tgap { width: 9px; }
.nub { width: 8px; height: 19px; border: 1px solid #999; background: linear-gradient(#999, #999) center / 100% 1px no-repeat #808080; }
.nub.first { width: 9px; margin-right: 1px; }

/* main area */
.workspace { display: grid; grid-template-columns: 400px minmax(0, 1fr); gap: 9px; margin-bottom: 8px; }
.browser { display: flex; flex-direction: column; }
.search-row { display: flex; justify-content: space-between; }
.search-frame { width: 372px; height: 24px; padding: 5px 5px 0 4px; background: var(--frame); border-radius: 5px 5px 0 0; }
.search { width: 100%; height: 19px; display: block; background: #b3b3b3; padding-left: 8px; color: #444; }
.search::placeholder { color: #4a4a4a; opacity: 1; }
.browser-body { flex: 1; display: grid; grid-template-columns: 115px minmax(0, 1fr); gap: 2px; padding: 5px; background: var(--frame); border-radius: 5px 0 0 5px; }
.side, .files { background: var(--panel); display: flex; flex-direction: column; min-height: 0; }
.side h2 { height: 20px; line-height: 20px; padding-left: 5px; color: #3a3a3a; -webkit-text-stroke: .3px #3a3a3a; }
.side li h2 { padding-left: 8px; }
.rows { flex: 1; display: grid; grid-template-rows: repeat(34, minmax(0, 1fr)); font-weight: 700; font-size: 10px; }
.side a { display: flex; align-items: center; gap: 6px; height: 20px; padding-left: 5px; color: inherit; text-decoration: none; white-space: nowrap; }
.side a svg { width: 15px; height: 15px; }
.picked { background: var(--mint); }
.side u { text-underline-offset: 3px; }
.files-head { height: 20px; display: flex; align-items: center; justify-content: space-between; padding: 0 21px 0 4px; background: #6f6f6f; font-weight: 700; font-size: 10px; }
.files-body { flex: 1; display: grid; grid-template-columns: minmax(0, 1fr) 17px; }
.file-rows button { position: relative; width: 100%; height: 20px; padding-left: 39px; text-align: left; display: block; }
.file-rows button::before { content: ""; position: absolute; left: 5px; top: 5px; width: 8px; height: 10px; background: url("data:image/svg+xml,%3Csvg xmlns='http://www.w3.org/2000/svg' width='8' height='10'%3E%3Cpath d='M1 1.500L7 5L1 8.500Z' fill='none' stroke='%23333'/%3E%3C/svg%3E"); }
.file-rows button::after { content: ""; position: absolute; left: 18px; top: 4px; width: 16px; height: 12px; border: 1px solid #222; border-radius: 2px; background: linear-gradient(#6a6a6a 0 4px, #4a4a4a 4px); }
.scroll { display: flex; flex-direction: column; align-items: center; justify-content: space-between; padding: 5px 0 4px; }
.scroll i { flex: 1; width: 10px; margin: 39px 0 5px; background: #57575b; }
.preview-row { display: flex; justify-content: space-between; align-items: flex-end; }
.preview-frame { width: 372px; padding: 0 5px 5px 4px; background: var(--frame); border-radius: 0 0 5px 5px; }
.preview-box { display: flex; align-items: center; gap: 3px; height: 21px; padding: 0 4px; background: #9a9a9a; }
.preview-box input { flex: 1; height: 16px; background: #b3b3b3; border: 1px solid #6a6a6a; }

/* arrangement */
.arrange { display: grid; grid-template-columns: minmax(0, 1fr) 27px; }
.arr-main { position: relative; display: flex; flex-direction: column; padding-left: 5px; padding-right: 1px; background: var(--dark); border-radius: 6px 0 0 6px; }
.overview { position: relative; height: 21px; margin: 5px 4px 0 0; background: #8a8a8a; }
.overview > svg { width: 100%; height: 100%; }
.view { position: absolute; left: 0; top: 0; bottom: 0; width: 80.5%; outline: 1px solid #000; border: 2px solid #000; border-right-width: 3px; }
.line-row { display: grid; grid-template-columns: minmax(0, 1fr) 313px; gap: 2px; position: relative; }
.ruler { position: relative; height: 28px; overflow: hidden; }
.ruler span { position: absolute; bottom: 1px; height: 13px; padding-left: 5px; border-left: 1px solid; border-image: linear-gradient(transparent 50%, #1a1a1a 50%) 1; line-height: 13px; }
.scrub { position: relative; height: 26px; }
.scrub, .lane { background: repeating-linear-gradient(90deg, #787878 0 1px, transparent 1px calc(200% / 124.1)) #8a8a8a; }
.loop-brace { position: absolute; top: 0; width: 32px; height: 12px; border: 1px solid #222; background: #999; }
.locators { display: flex; align-items: center; gap: 3px; padding: 8px 0 0 2px; }
.set { width: 31px; height: 14px; border-radius: 7px; background: #9c9c9c; }
.lock { width: 24px; height: 14px; background: #9a9a9a; border: 1px solid #777; display: flex; align-items: center; justify-content: center; margin-left: 2px; }
.speaker { position: absolute; left: 22px; top: 6px; z-index: 3; }
.insert-strip { position: relative; height: 8px; background: #555; }
.at-insert { position: absolute; margin-left: -4px; top: 2px; }
.tracks { flex: 1 1 0; display: flex; flex-direction: column; min-height: 605px; }
.returns { flex: 0 0 60px; min-height: 0; margin-top: 3px; }
.track { flex: 1 1 0; min-height: 0; display: grid; grid-template-columns: minmax(0, 1fr) 101px 80px 128px; grid-template-rows: minmax(0, 1fr) 2px; column-gap: 2px; }
.lane { position: relative; overflow: hidden; }
.name-cell, .io, .mix { background: #8c8c8c; overflow: hidden; min-height: 0; }
.selected .lane { background-color: #b3b1b1; }
.selected .name-cell, .selected .io, .selected .mix { background: #b5b3b3; }
.clip { position: absolute; top: 1px; height: 17px; border: 1px solid #000; box-shadow: inset 1px 0 0 #0003; padding-left: 1px; font-weight: 700; font-size: 10px; line-height: 15px; white-space: nowrap; overflow: hidden; }
.clip.split { background-image: linear-gradient(#333, #333), linear-gradient(#333, #333); background-size: 1px 3px; background-repeat: no-repeat; background-position: 50% 0, 50% 100%; }
.art { position: absolute; inset: 0; width: 100%; height: 100%; }
.art path { vector-effect: non-scaling-stroke; }
.cursor { position: absolute; top: 0; bottom: 0; width: 1px; background: #fff; }
.node-a, .node-b { position: absolute; width: 6px; height: 6px; margin-left: -3px; border: 1px solid #cc1118; border-radius: 50%; background: #ddc; }
.node-a { bottom: 0; }
.node-b { top: 36px; }
.name-cell { display: grid; grid-template-columns: 12px minmax(0, 1fr); grid-template-rows: minmax(0, 1fr); column-gap: 2px; }
.name-cell header { grid-column: 1 / -1; display: flex; align-items: center; gap: 6px; padding-left: 3px; overflow: hidden; }
.name-cell h3, .device h3, .folded h3 { font: italic 700 12px/14px "Liberation Sans", Arial, sans-serif; white-space: nowrap; }
.open .name-cell { grid-template-rows: 18px minmax(0, 1fr); }
.tall .name-cell { grid-template-rows: 37px minmax(0, 1fr); }
.tall .name-cell header { align-items: flex-start; padding-top: 2px; }
.child .name-cell { overflow: visible; background: #555; }
.child .name-cell header { grid-column: 2; grid-row: 1; }
.child .group-bar { grid-column: 1; grid-row: 1 / -1; margin-bottom: -2px; }
.child.last .group-bar { margin-bottom: 0; }
.group .name-cell { overflow: visible; }
.group .group-bar { grid-column: 1; grid-row: 2; margin-bottom: -2px; order: 2; position: relative; }
.group .group-bar::after { content: ""; position: absolute; left: 3px; bottom: 4px; border: 3px solid transparent; border-top: 4px solid #111; border-bottom: 0; }
.name-body { grid-column: 1 / -1; display: flex; flex-direction: column; gap: 4px; padding: 3px 4px 0 3px; overflow: hidden; }
.child .name-body, .group .name-body { grid-column: 2; padding-left: 1px; order: 3; }
.selected .name-body { background: #b5b3b3; }
.plus { margin: auto 0 4px auto; }
.fld { height: 14px; flex: none; display: block; border: 1px solid #222; background-color: var(--light); text-align: center; line-height: 12px; overflow: hidden; }
select.fld { width: 100%; padding: 0 9px 0 1px; text-align: left; background-image: var(--arrow); background-position: right 2px center; background-repeat: no-repeat; }
select.pad, select.lit { padding-left: 11px; }
select.lit { background-image: var(--arrow), linear-gradient(#d8141c, #d8141c); background-position: right 2px center, 3px 3px; background-size: auto, 6px 6px; }
select.chan { padding-left: 11px; background-image: var(--arrow), repeating-linear-gradient(#111 0 2px, transparent 2px 3px); background-position: right 2px center, 3px 2px; background-size: auto, 3px 9px; }
select.bus { padding-left: 11px; background-image: var(--arrow), repeating-linear-gradient(90deg, #111 0 2px, transparent 2px 4px); background-position: right 2px center, 2px 2px; background-size: auto, 6px 9px; }
.fld.blank { background: none; }
.fld.act { background-color: #999; font-weight: 700; display: flex; align-items: center; justify-content: center; }
.fld.act.yes, .fld.yes { background-color: var(--yellow); }
.fld.act.armed { background-color: #d05468; }
.io { display: flex; flex-direction: column; gap: 4px; padding: 3px 2px 0; }
.monitor { display: flex; gap: 4px; justify-content: space-between; }
.monitor button { height: 14px; flex: 1 0 20px; border: 1px solid #222; background: #8c8c8c; line-height: 12px; }
.monitor .yes { flex: 1 0 28px; background: var(--yellow); }
.mix { display: flex; padding-left: 3px; }
.mix-grid { display: grid; grid-template-columns: repeat(4, 23px); grid-auto-rows: 14px; gap: 4px 5px; padding-top: 3px; margin-right: 7px; }
.two { grid-column: span 2; }
.send { display: flex; gap: 5px; }
.send .fld:first-child { width: 19px; } .send .fld:last-child { width: 27px; }
input.fld { width: 100%; }
.fill { background-image: linear-gradient(90deg, #de7038 var(--v), transparent var(--v)); }
.fill.cue { background-image: linear-gradient(90deg, #2a88d0 var(--v), transparent var(--v)); }
.fill.auto { background-image: linear-gradient(#d8141c, #d8141c), linear-gradient(90deg, #de7038 var(--v), transparent var(--v)); background-size: 5px 5px, auto; background-repeat: no-repeat; }
.pan, .bi { background-image: linear-gradient(to bottom right, transparent 50%, #8a8a8a 50%), linear-gradient(to top right, transparent 50%, #8a8a8a 50%); background-size: 7px 6px; background-position: right 0 top 0, right 0 bottom 0; background-repeat: no-repeat; }
.pan { padding-right: 7px; }
.pan.moved { background-image: linear-gradient(to bottom right, transparent 50%, #f0641c 50%), linear-gradient(to top right, transparent 50%, #f0641c 50%); }
.meter { width: 9px; background: linear-gradient(90deg, #161616 0 4px, transparent 4px 5px, #161616 5px); position: relative; overflow: hidden; }
.meter::after { content: ""; position: absolute; left: 0; right: 0; top: 4px; height: 1px; background: #8c8c8c; }
.open .meter::after { top: 15px; }
.time-row { height: 21px; }
.time-ruler { position: relative; overflow: hidden; }
.time-ruler span { position: absolute; top: 0; height: 3px; border-left: 1px solid #222; }
.time-ruler .major { height: 9px; padding: 3px 0 0 3px; line-height: 12px; }
.time-ruler .at-insert { top: 0; }
.zoom-level { position: absolute; right: 319px; bottom: 20px; font-size: 18px; line-height: 20px; color: #3c3c3c; z-index: 2; }
.rail { display: flex; flex-direction: column; }
.rail-top { display: flex; flex-direction: column; align-items: flex-end; gap: 4px; height: 51px; }
.rail-body { flex: 1; background: var(--dark); border-radius: 0 6px 6px 0; display: flex; flex-direction: column; align-items: center; padding: 10px 0 31px 7px; }
.rail-body i { flex: 1; width: 9px; margin: 5px 0 46px; background: #333; }
.dot { width: 15px; height: 15px; border-radius: 50%; margin-top: 6px; background: #111; color: #777; font-size: 8px; line-height: 15px; flex: none; }
.rail-body svg + .dot { margin-top: 9px; }
.dot.on { background: #f5d420; color: #333; }

/* device chain */
.devices { height: 215px; margin-bottom: 10px; padding: 6px 5px; display: flex; background: var(--frame); border-radius: 6px; }
.device { background: var(--panel); border-radius: 6px; display: flex; flex-direction: column; flex: none; overflow: hidden; border: 1px solid #aaa8a8; border-top: 0; }
.device header { height: 19px; flex: none; display: flex; align-items: center; gap: 4px; padding: 0 3px; background: #aeacac; }
.device h3, .grow { flex: 1; }
.ic { width: 14px; height: 14px; }
.cut { width: 309px; border-radius: 0; border-left: 0; }
.cut header { padding-right: 4px; }
.synth { flex: 1; padding: 4px 4px 0 0; display: flex; flex-direction: column; }
.wave { height: 53px; background: #a88b10; border-right: 1px solid #333; overflow: hidden; }
.synth-params { flex: 1; display: flex; justify-content: flex-end; overflow: hidden; gap: 3px; }
.synth-left { width: 257px; overflow: hidden; display: flex; flex-direction: column; }
.prow { display: flex; justify-content: flex-end; }
.prow.top { height: 64px; padding-top: 4px; border-bottom: 1px solid #555; }
.prow.bottom { gap: 5px; padding-top: 2px; }
.synth .kn svg { margin: 2px 0; }
.pcol { width: 39px; display: flex; flex-direction: column; flex: none; position: relative; }
.pcol label, .qual { display: block; line-height: 14px; white-space: nowrap; position: relative; }
.pcol.sep::before { content: ""; position: absolute; left: -4px; top: 0; bottom: 0; border-left: 1px solid #555; }
.pcol.w47 { width: 39px; margin: 0 5px 0 20px; }
.prow.bottom .sep { margin-left: 3px; }
.synth-right { margin: 4px 0 0 5px; }
.synth-right .push { margin-top: 6px; }
.box { height: 14px; width: 100%; display: block; flex: none; border: 1px solid #222; background-color: var(--light); line-height: 12px; text-align: center; overflow: hidden; white-space: nowrap; }
.box.off { background-color: #8e8e8e; }
.box.yes { background-color: var(--yellow); }
.box.dimtext { color: #555; }
select.box { padding: 0 9px 0 2px; text-align: left; background-image: var(--arrow); background-repeat: no-repeat; background-position: right 2px center; }
.bi { padding-right: 6px; }
.pair { display: flex; gap: 4px; }
.pair .box { flex: 1; display: flex; align-items: center; justify-content: center; }
.pair .tiny { flex: 0 0 11px; }
.pair select.box { padding-right: 0; }
.kn { display: flex; flex-direction: column; align-items: center; line-height: 13px; white-space: nowrap; flex: none; position: relative; }
.w45 { width: 44px; } .w42 { width: 42px; } .w85 { width: 85px; } .w120 { width: 120px; } .w60 { width: 62px; } .w43 { width: 43px; }
.rv-col.w45 { width: 45px; }
.box.w48 { width: 48px; } .box.w30 { width: 30px; } .box.w35 { width: 35px; } .box.w14 { width: 13px; }
.box.f1 { flex: 1; width: 0; } .box.f5 { width: 48px; } .box.f3 { width: 32px; }
.marked { position: relative; }
.marked::after { content: ""; position: absolute; left: 2px; top: 12px; width: 5px; height: 5px; background: #20f060; border-radius: 1px; }
.folded { width: 20px; margin-left: 2px; background: var(--panel); display: flex; flex-direction: column; align-items: center; gap: 4px; padding-bottom: 3px; flex: none; border-bottom: 1px solid #aaa8a8; }
.folded header { width: 100%; height: 19px; background: #aeacac; display: flex; align-items: center; justify-content: center; margin-bottom: auto; }
.folded h3 { writing-mode: vertical-rl; transform: rotate(180deg); }
.folded.marked::after { top: 1px; }
.folded.end { border-radius: 0 6px 6px 0; width: 17px; overflow: hidden; }
.level { flex: 1 1 0; background: linear-gradient(90deg, #161616 0 2px, #777 2px 3px, #161616 3px) center / 5px 43px no-repeat; }

.eq { width: 513px; background: #aeacac; }
.eq-body { flex: 1; display: flex; gap: 2px; padding: 0 2px 1px 1px; }
.eq-knobs, .eq-side { background: var(--panel); border-radius: 4px; }
.eq-knobs { width: 49px; display: flex; flex-direction: column; justify-content: space-between; padding: 2px 0 3px; }
.kn.tri > span:first-child { margin-bottom: 6px; }
.kn.tri::before { content: ""; position: absolute; top: 14px; left: 20px; border: 4px solid transparent; border-top: 5px solid #d8502c; border-bottom: 0; }
.eq-center { width: 404px; display: flex; flex-direction: column; gap: 3px; }
.eq-graph { background: #14161e; border-radius: 5px; }
.bands { flex: 1; display: grid; grid-template-columns: repeat(8, 1fr); gap: 3px; }
.band { background: var(--panel); border-radius: 4px; padding: 2px 4px; }
.band.cur { background: #b6b4b4; }
.band select { width: 100%; height: 15px; display: block; border: 1px solid #222; background-color: #b8b8b8; background-repeat: no-repeat; background-position: right 2px center, 2px center; }
.band.idle select { background-color: #8e8e8e; }
.band label { display: flex; align-items: center; gap: 7px; padding: 3px 0 0 8px; font-weight: 700; }
.band input { appearance: none; width: 12px; height: 12px; border: 1px solid #222; }
.band input:checked { background: #f55a10; }
.s-lc { background-image: var(--arrow), url("data:image/svg+xml,%3Csvg xmlns='http://www.w3.org/2000/svg' width='18' height='11' fill='none' stroke='%23111' stroke-width='1.200'%3E%3Cpath d='M0 1H4Q7 1 9 5.500H17M0 10H4Q7 10 9 5.500'/%3E%3C/svg%3E"); }
.s-bell { background-image: var(--arrow), url("data:image/svg+xml,%3Csvg xmlns='http://www.w3.org/2000/svg' width='18' height='11' fill='none' stroke='%23111' stroke-width='1.200'%3E%3Cpath d='M0 5.500H3Q6 1 9 1T15 5.500H18M3 5.500Q6 10 9 10T15 5.500'/%3E%3C/svg%3E"); }
.s-hs { background-image: var(--arrow), url("data:image/svg+xml,%3Csvg xmlns='http://www.w3.org/2000/svg' width='18' height='11' fill='none' stroke='%23111' stroke-width='1.200'%3E%3Cpath d='M1 5.500H8Q11 1 13 1H18M8 5.500Q11 10 13 10H18'/%3E%3C/svg%3E"); }
.s-hc { background-image: var(--arrow), url("data:image/svg+xml,%3Csvg xmlns='http://www.w3.org/2000/svg' width='18' height='11' fill='none' stroke='%23111' stroke-width='1.200'%3E%3Cpath d='M0 2H11Q16 2 16 9'/%3E%3C/svg%3E"); }
.eq-side { flex: 1; padding: 6px 3px 0; display: flex; flex-direction: column; gap: 5px; }
.eq-side label { font-weight: 700; font-size: 10px; line-height: 12px; }
.eq-side .box { font-weight: 400; font-size: 11px; }
.eq-side .pair { gap: 5px; }

.reverb { width: 519px; }
.rv { flex: 1; display: flex; gap: 10px; padding: 1px 4px 0 6px; }
.rv-col { display: flex; flex-direction: column; flex: none; position: relative; }
.rv-col h4, .drop { font-weight: 700; font-size: 10px; line-height: 14px; white-space: nowrap; }
.rv-col h4 { margin-bottom: 2px; }
.boxes { display: flex; justify-content: space-between; gap: 3px; height: 14px; }
.scope { background: #14161e; border-radius: 5px; margin: 3px 0; }
.mesh { stroke: #30343e; fill: none; }
.curve { stroke: #e0602c; stroke-width: 2; fill: none; }
.node { fill: none; stroke: #f5dc28; stroke-width: 1.8px; }
.node.dim { stroke: #a8a8b0; }
.rv-col > .kn, .foot { margin-top: auto; }
.rv-col, .pp-body { padding-bottom: 2px; }
.left { align-self: flex-start; margin-left: 5px; }
.left2 { align-self: flex-start; }
.foot { display: flex; justify-content: space-between; }
.chorus { margin-left: -4px; }
.rv-end { justify-content: space-between; margin-left: -2px; padding-top: 1px; }
.rv-end .kn { margin: 0; }
.qual .box { margin-top: 2px; width: 43px; }
.qual { line-height: 16px; }
.fz { width: 50px; display: flex; flex-direction: column; gap: 4px; }
.fz .pair .box { width: auto; }

.pp { width: 117px; }
.pp-body { flex: 1; padding: 0 3px 2px; display: flex; flex-direction: column; }
.beats { display: grid; grid-template-columns: repeat(4, 1fr); gap: 4px 3px; margin: 5px 0 4px; }
.foot .kn { margin: 0; }
.pp .foot { justify-content: space-around; }
.drop { width: 108px; background: var(--panel); display: flex; align-items: center; justify-content: center; text-align: center; line-height: 16px; flex: none; }

/* status bar */
.status { display: grid; grid-template-columns: 20px minmax(0, 1fr) 222px 268px 20px; align-items: center; height: 23px; }
.status .round { width: 20px; }
.msg, .msg2 { height: 23px; border: 3px solid var(--frame); border-radius: 3px; background: var(--panel); }
.msg { margin: 0 12px 0 10px; padding-left: 8px; font-weight: 700; font-size: 10px; line-height: 17px; }
.tab { height: 33px; margin: -10px 9px 0 11px; padding: 8px 4px 0 5px; display: flex; gap: 4px; justify-content: space-between; align-items: center; background: var(--frame); border-radius: 0 0 5px 5px; font-weight: 700; font-size: 10px; }
.corner { position: absolute; right: 0; bottom: 0; }
```
